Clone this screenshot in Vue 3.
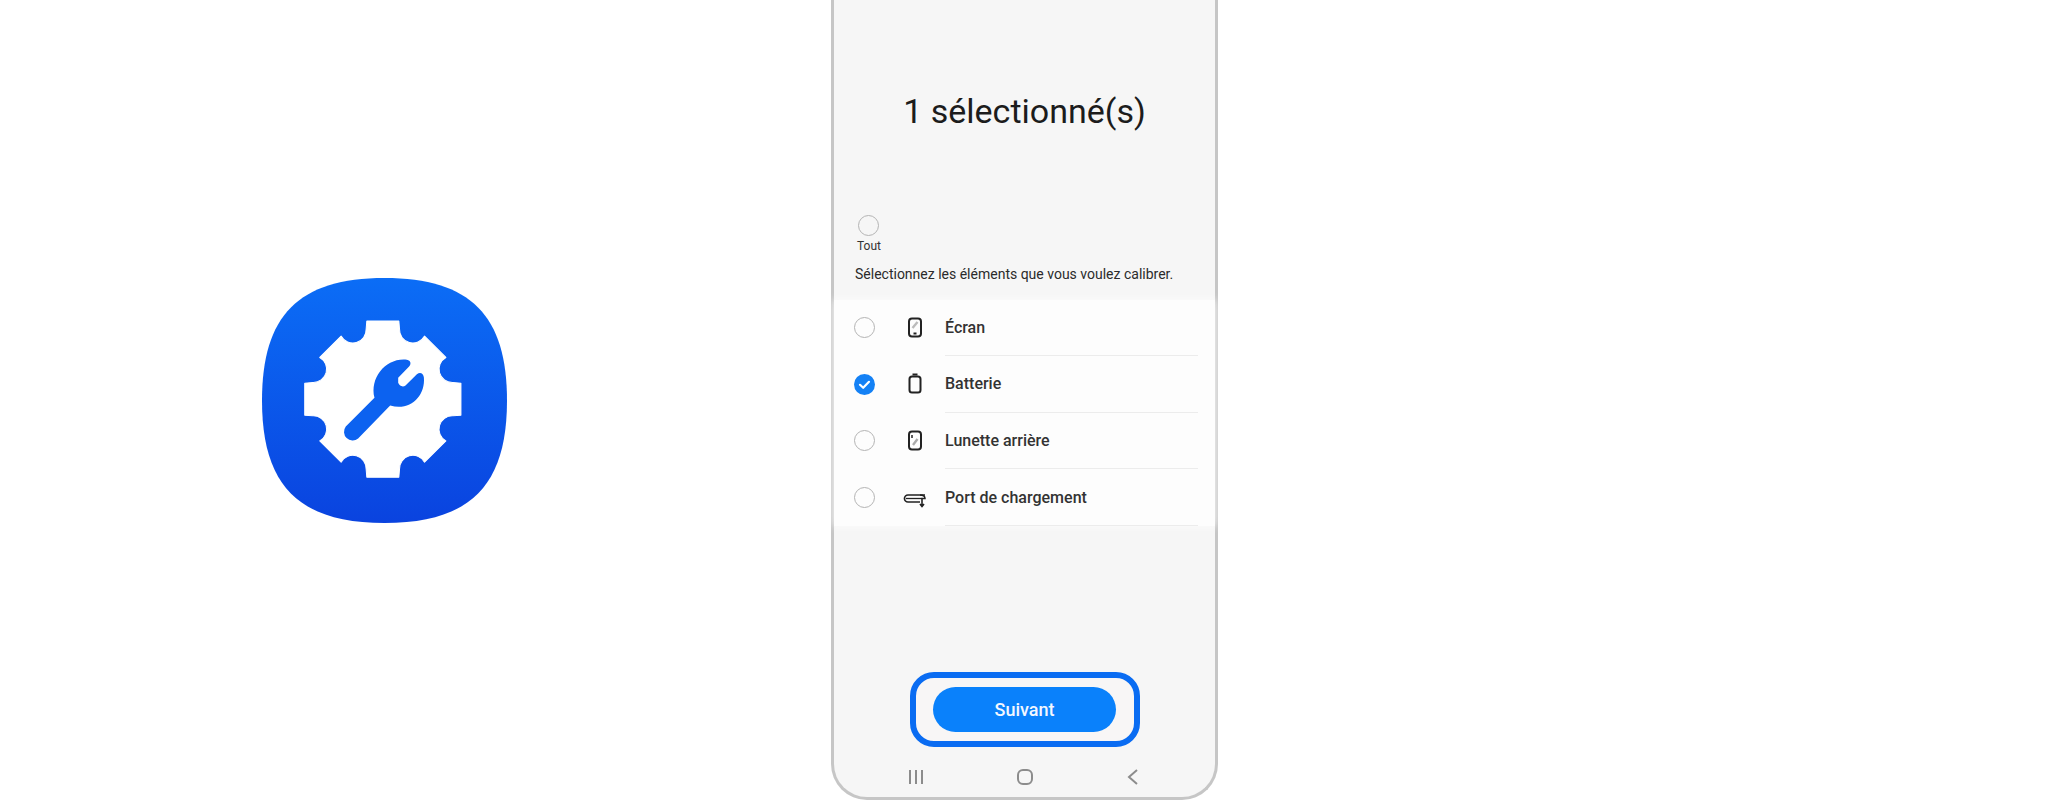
<template>
  <div class="page">
    <div class="app-icon">
      <svg width="245" height="245" viewBox="66 52 734 734">
        <defs>
          <linearGradient id="tile" x1="0" y1="0" x2="0" y2="1">
            <stop offset="0" stop-color="#0b6df6" />
            <stop offset="1" stop-color="#0a43df" />
          </linearGradient>
        </defs>
        <path fill="url(#tile)" d="M433 52C175 52 66 165 66 419C66 673 175 786 433 786C691 786 800 673 800 419C800 165 691 52 433 52Z" />
        <path fill="#fff" stroke="#fff" stroke-width="3" stroke-linejoin="round" d="M380 181L476 181L478 205A40 40 0 0 0 553 226L617 290A40 40 0 0 0 638 365L662 367L662 463L638 465A40 40 0 0 0 617 540L553 604A40 40 0 0 0 478 625L476 649L380 649L378 625A40 40 0 0 0 303 604L239 540A40 40 0 0 0 218 465L194 463L194 367L218 365A40 40 0 0 0 239 290L303 226A40 40 0 0 0 378 205Z" />
        <path fill="#0c62f0" d="M317 497L403 411C388 350 438 290 500 297C512 299 514 310 506 318L474 351L474 366C478 376 488 380 496 374L530 340C540 332 550 338 551 350C556 405 510 452 450 434L354 533A26 26 0 0 1 317 497Z" />
      </svg>
    </div>

    <div class="phone">
      <h1 class="title">1 sélectionné(s)</h1>

      <div class="select-all">
        <span class="radio"></span>
        <span class="select-all-label">Tout</span>
      </div>
      <p class="hint">Sélectionnez les éléments que vous voulez calibrer.</p>

      <ul class="list">
        <li v-for="item in items" :key="item.name" class="row">
          <span class="radio" :class="{ checked: item.checked }">
            <svg v-if="item.checked" width="21" height="21" viewBox="0 0 21 21">
              <path d="M6 10.8l3.2 3 5.8-6" fill="none" stroke="#fff" stroke-width="2.2" stroke-linecap="round" stroke-linejoin="round" />
            </svg>
          </span>
          <span class="row-icon">
            <svg width="26" height="24" viewBox="0 0 26 24" fill="none" stroke="#222" stroke-width="2">
              <template v-if="item.icon === 'screen'">
                <rect x="7" y="2.5" width="12" height="18" rx="3" />
                <path d="M11.5 17.5h3" />
                <path d="M10.5 12l5-6" stroke="#bbb" stroke-width="2.4" />
              </template>
              <template v-else-if="item.icon === 'battery'">
                <rect x="7.5" y="4.5" width="11" height="16" rx="2.5" />
                <path d="M10.5 2.5h5" />
              </template>
              <template v-else-if="item.icon === 'back'">
                <rect x="7" y="2.5" width="12" height="18" rx="3" />
                <path d="M10 6v3" stroke-width="1.5" />
                <path d="M11 16l4.5-6" stroke="#aaa" stroke-width="2.4" />
              </template>
              <template v-else>
                <path d="M23 9H6a3.5 3.5 0 0 0 0 7h12" stroke-width="1.7" />
                <path d="M4 12.5h15" stroke-width="1.3" />
                <path d="M18 9c3 0 5 1 5 3.5h-4" stroke-width="1.5" />
                <path d="M20 13v7M18 18l2 2.5 2-2.5" stroke-width="1.6" />
              </template>
            </svg>
          </span>
          <span class="row-label">{{ item.name }}</span>
        </li>
      </ul>

      <div class="footer">
        <div class="highlight">
          <button class="next">Suivant</button>
        </div>
        <div class="nav">
          <svg width="18" height="18" viewBox="0 0 18 18" stroke="#8c8c8c" stroke-width="2" fill="none">
            <path d="M3 2v14M9 2v14M15 2v14" />
          </svg>
          <svg width="18" height="18" viewBox="0 0 18 18" stroke="#8c8c8c" stroke-width="2" fill="none">
            <rect x="2" y="2" width="14" height="14" rx="5" />
          </svg>
          <svg width="18" height="18" viewBox="0 0 18 18" stroke="#8c8c8c" stroke-width="2" fill="none">
            <path d="M13 2L5 9l8 7" />
          </svg>
        </div>
      </div>
    </div>
  </div>
</template>

<script setup>
const items = [
  { name: 'Écran', icon: 'screen', checked: false },
  { name: 'Batterie', icon: 'battery', checked: true },
  { name: 'Lunette arrière', icon: 'back', checked: false },
  { name: 'Port de chargement', icon: 'port', checked: false }
];
</script>

<style scoped>
.page {
  display: flex;
  width: 2048px;
  height: 800px;
  overflow: hidden;
  background: #fff;
  font-family: Roboto, "Liberation Sans", sans-serif;
}

.app-icon {
  display: flex;
  align-items: center;
  width: 831px;
  flex-shrink: 0;
  padding-left: 262px;
  box-sizing: border-box;
}

.app-icon svg {
  display: block;
}

.phone {
  display: flex;
  flex-direction: column;
  width: 387px;
  height: 800px;
  box-sizing: border-box;
  background: #f6f6f6;
  border: 3px solid #c6c6c6;
  border-top: none;
  border-radius: 0 0 36px 36px;
}

.title {
  margin: 89px 0 0;
  font-size: 34px;
  font-weight: 400;
  line-height: 44px;
  text-align: center;
  color: #1c1c1c;
}

.select-all {
  display: flex;
  flex-direction: column;
  align-items: center;
  align-self: flex-start;
  margin: 82px 0 0 23px;
}

.select-all-label {
  margin-top: 2px;
  font-size: 12px;
  line-height: 16px;
  color: #333;
}

.hint {
  margin: 10.5px 0 0 21px;
  font-size: 14px;
  line-height: 18px;
  color: #2b2b2b;
}

.list {
  margin: 17px 0 0;
  padding: 0 17px 0 20px;
  list-style: none;
  background: #fdfdfd;
  box-shadow: 0 0 8px #fdfdfd;
}

.row {
  display: flex;
  align-items: center;
  height: 56.6px;
}

.radio {
  display: block;
  width: 21px;
  height: 21px;
  box-sizing: border-box;
  border: 1.5px solid #b4b4b4;
  border-radius: 50%;
  flex-shrink: 0;
}

.radio.checked {
  background: #1481f5;
  border: none;
}

.radio svg {
  display: block;
}

.row-icon {
  display: flex;
  justify-content: center;
  width: 26px;
  margin-left: 27px;
  flex-shrink: 0;
}

.row-label {
  display: flex;
  align-items: center;
  flex: 1;
  align-self: stretch;
  margin-left: 17px;
  border-bottom: 1.5px solid #ececec;
  font-size: 16px;
  font-weight: 500;
  color: #333;
}

.footer {
  display: flex;
  flex-direction: column;
  align-items: center;
  margin-top: auto;
}

.highlight {
  display: flex;
  justify-content: center;
  align-items: center;
  width: 230px;
  height: 75px;
  box-sizing: border-box;
  border: 6px solid #0a6cf2;
  border-radius: 24px;
  background: #f8f6f6;
}

.next {
  width: 183px;
  height: 45px;
  border: none;
  border-radius: 23px;
  background: #0a81fb;
  color: #f2f7ff;
  font-family: inherit;
  font-size: 18px;
  font-weight: 500;
}

.nav {
  display: flex;
  justify-content: space-between;
  align-self: stretch;
  padding: 21px 73px 11.5px;
}

.nav svg {
  display: block;
}
</style>
